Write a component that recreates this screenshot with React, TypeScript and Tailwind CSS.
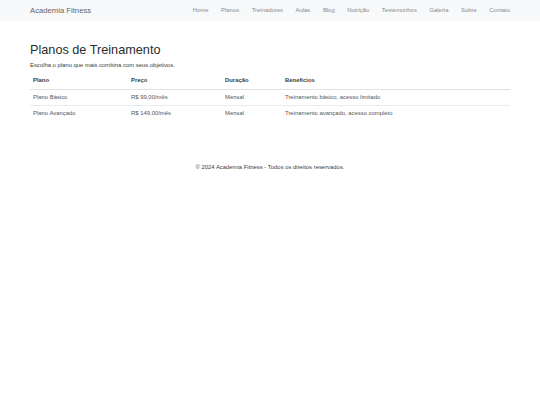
import React from 'react';

const links = ['Home', 'Planos', 'Treinadores', 'Aulas', 'Blog', 'Nutrição', 'Testemunhos', 'Galeria', 'Sobre', 'Contato'];

const plans = [
  { name: 'Plano Básico', price: 'R$ 99,00/mês', duration: 'Mensal', benefits: 'Treinamento básico, acesso limitado' },
  { name: 'Plano Avançado', price: 'R$ 149,00/mês', duration: 'Mensal', benefits: 'Treinamento avançado, acesso completo' },
];

const App: React.FC = () => {
  return (
    <div className="min-h-[405px] bg-white text-[#3a3d40]" style={{ fontFamily: '"Liberation Sans", Arial, sans-serif' }}>
      {/* Navbar */}
      <nav className="h-[21px] bg-[#f8f9fa]">
        <div className="mx-[30px] flex h-full items-center justify-between">
          <span className="text-[7.7px] text-[#666]">Academia Fitness</span>
          <ul className="flex items-center gap-[12.6px]">
            {links.map((link) => (
              <li key={link} className="text-[5.9px] text-[#8a8a8a]">
                {link}
              </li>
            ))}
          </ul>
        </div>
      </nav>

      {/* Plans */}
      <main className="mx-[30px] pt-[21px]">
        <h1 className="text-[12.7px] leading-[16px] font-normal text-[#2a2d30]">Planos de Treinamento</h1>
        <p className="mt-[3px] text-[5.9px] leading-[8px]">Escolha o plano que mais combina com seus objetivos.</p>

        <table className="mt-[4px] w-full border-collapse text-[5.9px]">
          <thead>
            <tr className="border-b border-[#dee2e6]">
              <th className="w-[98px] h-[16px] px-[3px] text-left font-bold">Plano</th>
              <th className="w-[94px] px-[3px] text-left font-bold">Preço</th>
              <th className="w-[60px] px-[3px] text-left font-bold">Duração</th>
              <th className="px-[3px] text-left font-bold">Benefícios</th>
            </tr>
          </thead>
          <tbody className="text-[#555]">
            {plans.map((plan, i) => (
              <tr key={plan.name} className={i === 0 ? 'border-b border-[#e9ecef]' : ''}>
                <td className="h-[16px] px-[3px]">{plan.name}</td>
                <td className="px-[3px]">{plan.price}</td>
                <td className="px-[3px]">{plan.duration}</td>
                <td className="px-[3px]">{plan.benefits}</td>
              </tr>
            ))}
          </tbody>
        </table>
      </main>

      {/* Footer */}
      <footer className="mt-[42px] text-center text-[5.9px]">
        © 2024 Academia Fitness - Todos os direitos reservados.
      </footer>
    </div>
  );
};

export default App;
